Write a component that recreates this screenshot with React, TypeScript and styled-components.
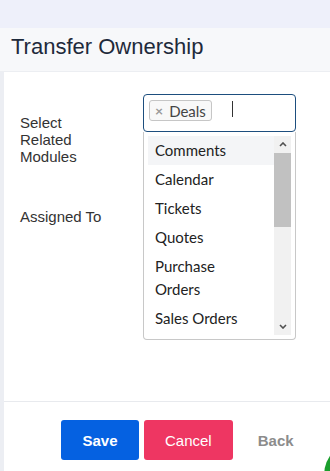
import React from 'react';
import styled, { createGlobalStyle } from 'styled-components';

const GlobalStyle = createGlobalStyle`
  html, body {
    margin: 0;
    padding: 0;
    background: #eceef3;
    overflow: hidden;
  }
  * {
    box-sizing: border-box;
  }
`;

const Page = styled.div`
  display: flex;
  flex-direction: column;
  min-height: 100vh;
  font-family: 'Liberation Sans', Arial, sans-serif;
`;

const TopBand = styled.div`
  height: 28px;
  background: #eef0fa;
`;

const Header = styled.div`
  height: 44px;
  padding: 6px 0 0 11px;
  background: #f7f8fa;
  border-bottom: 1px solid #eceef2;
`;

const Title = styled.h1`
  margin: 0;
  font-size: 22px;
  font-weight: 400;
  line-height: 25px;
  color: #1e2a3b;
`;

const Panel = styled.div`
  flex: 1;
  display: flex;
  flex-direction: column;
  margin-left: 4px;
  background: #fff;
`;

const Form = styled.div`
  flex: 1;
  display: flex;
  flex-direction: column;
  gap: 32px;
  padding: 22px 0 0 16px;
`;

const Row = styled.div`
  display: grid;
  grid-template-columns: 123px 153px;
`;

const Label = styled.div<{ $top: number }>`
  width: 92px;
  padding-top: ${({ $top }) => $top}px;
  font-size: 15px;
  line-height: 17px;
  color: #333;
`;

const Field = styled.div`
  position: relative;
`;

const SelectBox = styled.div<{ $active?: boolean }>`
  display: flex;
  align-items: flex-start;
  height: 38px;
  padding: 5px 5px 0;
  border: 1px solid ${({ $active }) => ($active ? '#1d4e7e' : '#c8c8c8')};
  border-radius: 4px;
  background: #fff;
`;

const Tag = styled.span`
  display: inline-flex;
  align-items: center;
  gap: 6px;
  height: 21px;
  padding: 0 5px;
  border: 1px solid #c6c6c6;
  border-radius: 3px;
  background: #f8f8f8;
  font-family: Lato, 'Liberation Sans', sans-serif;
  font-size: 15px;
  color: #444;
`;

const TagRemove = styled.span`
  font-size: 14px;
  font-weight: 700;
  color: #999;
`;

const Caret = styled.span`
  width: 1px;
  height: 16px;
  margin: 1px 0 0 20px;
  background: #333;
`;

const Dropdown = styled.div`
  position: absolute;
  top: 38px;
  left: 0;
  z-index: 2;
  display: flex;
  width: 153px;
  height: 208px;
  padding: 4px;
  border: 1px solid #c8c8c8;
  border-top: none;
  border-radius: 0 0 4px 4px;
  background: #fff;
`;

const OptionList = styled.ul`
  flex: 1;
  margin: 0;
  padding: 0;
  list-style: none;
  overflow: hidden;
`;

const Option = styled.li<{ $highlighted?: boolean }>`
  padding: 3px 14px 3px 7px;
  font-family: Lato, 'Liberation Sans', sans-serif;
  font-size: 15px;
  line-height: 23px;
  color: #222;
  background: ${({ $highlighted }) => ($highlighted ? '#f4f5f7' : 'transparent')};
`;

const ScrollTrack = styled.div`
  display: flex;
  flex-direction: column;
  width: 17px;
  background: #f1f1f1;
`;

const ScrollArrow = styled.div`
  display: flex;
  align-items: center;
  justify-content: center;
  height: 17px;
`;

const ScrollThumb = styled.div`
  height: 74px;
  background: #c1c1c1;
`;

const ScrollSpacer = styled.div`
  flex: 1;
`;

const Footer = styled.div`
  display: flex;
  gap: 5px;
  height: 70px;
  padding: 18px 0 0 57px;
  border-top: 1px solid #e8eaee;
`;

const Button = styled.button<{ $variant: 'save' | 'cancel' | 'back' }>`
  height: 40px;
  padding: 0 ${({ $variant }) => ($variant === 'cancel' ? '21px' : '20px')};
  border: none;
  border-radius: 3px;
  font-family: 'Liberation Sans', Arial, sans-serif;
  font-size: 15px;
  font-weight: ${({ $variant }) => ($variant === 'cancel' ? 400 : 700)};
  color: ${({ $variant }) => ($variant === 'back' ? '#8c8c8c' : '#fff')};
  background: ${({ $variant }) =>
    $variant === 'save' ? '#0561e1' : $variant === 'cancel' ? '#ee3662' : 'transparent'};
  min-width: ${({ $variant }) => ($variant === 'save' ? '78px' : 'auto')};
`;

const ChatBubble = styled.div`
  position: fixed;
  left: 324px;
  top: 441px;
  width: 68px;
  height: 68px;
  border-radius: 50%;
  background: #1a9e2c;
`;

const Chevron = ({ up }: { up?: boolean }) => (
  <svg width="8" height="5" viewBox="0 0 8 5">
    <path
      d={up ? 'M1 4 L4 1 L7 4' : 'M1 1 L4 4 L7 1'}
      fill="none"
      stroke="#505050"
      strokeWidth="1.6"
    />
  </svg>
);

const modules = [
  'Comments',
  'Calendar',
  'Tickets',
  'Quotes',
  'Purchase Orders',
  'Sales Orders',
  'Invoices',
  'Campaigns',
  'Vendors',
  'Price Books',
];

export default function App() {
  return (
    <>
      <GlobalStyle />
      <Page>
        <TopBand />
        <Header>
          <Title>Transfer Ownership</Title>
        </Header>
        <Panel>
          <Form>
            <Row>
              <Label $top={20}>Select Related Modules</Label>
              <Field>
                <SelectBox $active>
                  <Tag>
                    <TagRemove>×</TagRemove>
                    Deals
                  </Tag>
                  <Caret />
                </SelectBox>
                <Dropdown>
                  <OptionList>
                    {modules.map((m, i) => (
                      <Option key={m} $highlighted={i === 0}>
                        {m}
                      </Option>
                    ))}
                  </OptionList>
                  <ScrollTrack>
                    <ScrollArrow>
                      <Chevron up />
                    </ScrollArrow>
                    <ScrollThumb />
                    <ScrollSpacer />
                    <ScrollArrow>
                      <Chevron />
                    </ScrollArrow>
                  </ScrollTrack>
                </Dropdown>
              </Field>
            </Row>
            <Row>
              <Label $top={11}>Assigned To</Label>
              <Field>
                <SelectBox />
              </Field>
            </Row>
          </Form>
          <Footer>
            <Button $variant="save">Save</Button>
            <Button $variant="cancel">Cancel</Button>
            <Button $variant="back">Back</Button>
          </Footer>
        </Panel>
      </Page>
      <ChatBubble />
    </>
  );
}
